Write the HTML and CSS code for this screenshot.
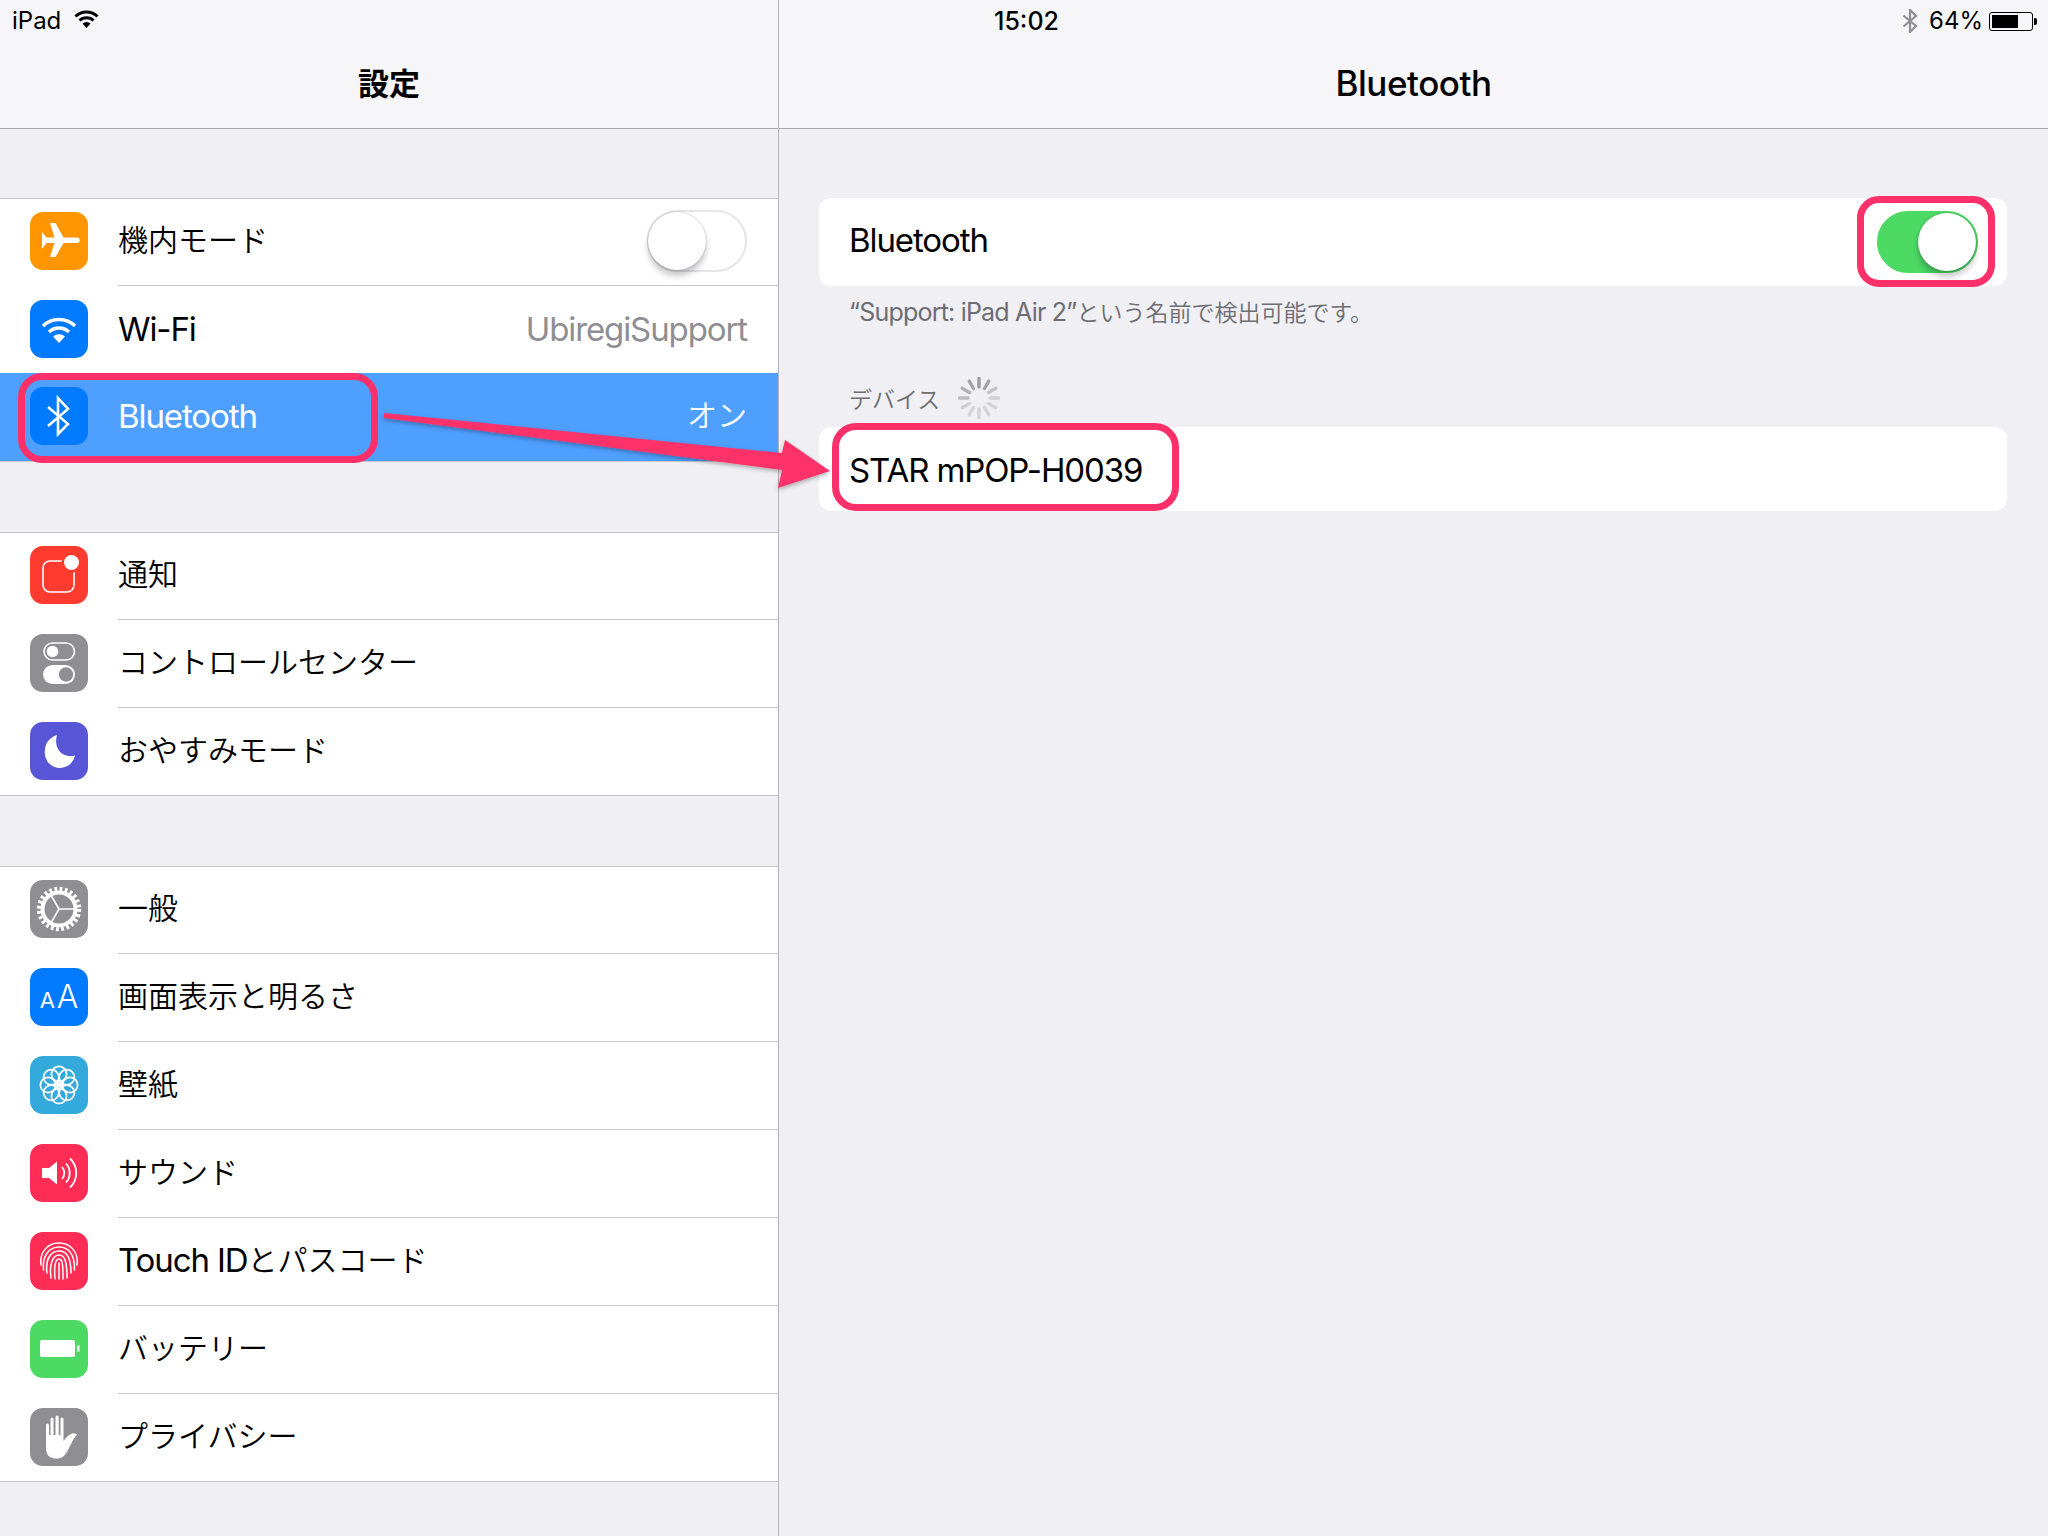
FILE: index.html
```html
<!DOCTYPE html>
<html lang="ja">
<head>
<meta charset="utf-8">
<title>設定 Bluetooth</title>
<link rel="stylesheet" href="styles.css">
</head>
<body>
<div class="screen">
  <aside class="master">
    <header class="bar">
      <div class="status status-left">
        <span>iPad</span>
        <svg class="status-wifi" viewBox="0 0 25 18"><path d="M1.500 6.500A15.500 15.500 0 0 1 23.500 6.500M5.500 10.500A10 10 0 0 1 19.500 10.500" fill="none" stroke="#000" stroke-width="3"/><path d="M12.500 18L8.500 13.500A6 6 0 0 1 16.500 13.500Z"/></svg>
      </div>
      <h1 class="title ja-bold">設定</h1>
    </header>
    <section class="group">
      <div class="row">
        <svg class="icon" viewBox="0 0 58 58"><rect width="58" height="58" rx="13" fill="#ff9500"/><path d="M47 25.500H33.500L25.500 11H20L24.500 25.500H16.500L12 20V37L16.500 31H24.500L20 45H25.500L33.500 31H47a2.750 2.750 0 0 0 0-5.500Z" fill="#fff"/></svg>
        <div class="cell"><span class="ja">機内モード</span><span class="toggle"><span class="knob"></span></span></div>
      </div>
      <div class="row">
        <svg class="icon" viewBox="0 0 58 58"><rect width="58" height="58" rx="13" fill="#007aff"/><path d="M13 26A23 23 0 0 1 45 26M19 32A14.500 14.500 0 0 1 39 32" fill="none" stroke="#fff" stroke-width="3.600"/><path d="M29 43L23 36.500A9 9 0 0 1 35 36.500Z" fill="#fff"/></svg>
        <div class="cell"><span>Wi-Fi</span><span class="detail">UbiregiSupport</span></div>
      </div>
      <div class="row row-selected">
        <svg class="icon" viewBox="0 0 58 58"><rect width="58" height="58" rx="13" fill="#007aff"/><path d="M18 20L38 37L28 47V11L38 22L18 39" fill="none" stroke="#fff" stroke-width="2.600"/></svg>
        <div class="cell"><span>Bluetooth</span><span class="detail ja">オン</span></div>
      </div>
    </section>
    <section class="group">
      <div class="row">
        <svg class="icon" viewBox="0 0 58 58"><rect width="58" height="58" rx="13" fill="#ff3b30"/><rect x="13" y="15" width="31" height="31" rx="7" fill="none" stroke="#fff" stroke-width="1.600"/><circle cx="41.500" cy="16.500" r="10" fill="#ff3b30"/><circle cx="41.500" cy="16.500" r="7.500" fill="#fff"/></svg>
        <div class="cell"><span class="ja">通知</span></div>
      </div>
      <div class="row">
        <svg class="icon" viewBox="0 0 58 58"><rect width="58" height="58" rx="13" fill="#8e8e93"/><rect x="14" y="9" width="30.500" height="17" rx="8.500" fill="none" stroke="#fff" stroke-width="1.600"/><circle cx="22.500" cy="17.500" r="5.800" fill="#fff"/><rect x="13" y="31" width="32" height="19" rx="9.500" fill="#fff"/><circle cx="36" cy="40.500" r="7.200" fill="#8e8e93"/></svg>
        <div class="cell"><span class="ja">コントロールセンター</span></div>
      </div>
      <div class="row">
        <svg class="icon" viewBox="0 0 58 58"><rect width="58" height="58" rx="13" fill="#5856d6"/><path d="M27 13C18 16 15 23 15 28A15 15 0 0 0 45 33.500C33 37 23 27 27 13Z" fill="#fff"/></svg>
        <div class="cell"><span class="ja">おやすみモード</span></div>
      </div>
    </section>
    <section class="group">
      <div class="row">
        <svg class="icon" viewBox="0 0 58 58"><rect width="58" height="58" rx="13" fill="#8e8e93"/><circle cx="29" cy="29" r="20" fill="none" stroke="#fff" stroke-width="4.500" stroke-dasharray="2.800 2.436"/><circle cx="29" cy="29" r="16.500" fill="none" stroke="#fff" stroke-width="4"/><path d="M29 29H45M29 29L20 13.500M29 29L20 44.500" stroke="#fff" stroke-width="1.600" fill="none"/></svg>
        <div class="cell"><span class="ja">一般</span></div>
      </div>
      <div class="row">
        <div class="icon icon-text"><span class="aa-small">A</span><span class="aa-large">A</span></div>
        <div class="cell"><span class="ja">画面表示と明るさ</span></div>
      </div>
      <div class="row">
        <svg class="icon" viewBox="0 0 58 58"><rect width="58" height="58" rx="13" fill="#34aadc"/><g fill="none" stroke="#fff" stroke-width="1.700"><circle cx="29" cy="18" r="7.600"/><circle cx="29" cy="40" r="7.600"/><circle cx="18" cy="29" r="7.600"/><circle cx="40" cy="29" r="7.600"/><circle cx="21.200" cy="21.200" r="7.600"/><circle cx="36.800" cy="21.200" r="7.600"/><circle cx="21.200" cy="36.800" r="7.600"/><circle cx="36.800" cy="36.800" r="7.600"/></g><circle cx="29" cy="29" r="2.800" fill="#fff"/></svg>
        <div class="cell"><span class="ja">壁紙</span></div>
      </div>
      <div class="row">
        <svg class="icon" viewBox="0 0 58 58"><rect width="58" height="58" rx="13" fill="#ff2d55"/><path d="M12 24H19L27 17.500V40.500L19 34H12Z" fill="#fff"/><path d="M32 23A9 9 0 0 1 32 35M36 19.500A14 14 0 0 1 36 38.500M40 14.500A20 20 0 0 1 40 43.500" fill="none" stroke="#fff" stroke-width="1.800"/></svg>
        <div class="cell"><span class="ja">サウンド</span></div>
      </div>
      <div class="row">
        <svg class="icon" viewBox="0 0 58 58"><rect width="58" height="58" rx="13" fill="#ff2d55"/><g fill="none" stroke="#fff" stroke-width="1.500" stroke-linecap="round"><path d="M11 33C9 20 18 11 29 11S49 20 47 33"/><path d="M13.500 38C12 24 19 15 29 15S45 23 44.500 38"/><path d="M17 41C15 27 21 19 29 19S41 26 41 41"/><path d="M21 46C19 32 23 23 29 23S37 30 37 46"/><path d="M25 47C24 35 25 27 29 27S33 35 33 47"/><path d="M29 31V47"/></g></svg>
        <div class="cell"><span>Touch ID</span><span class="ja">とパスコード</span></div>
      </div>
      <div class="row">
        <svg class="icon" viewBox="0 0 58 58"><rect width="58" height="58" rx="13" fill="#4cd964"/><rect x="10" y="20" width="35" height="17" rx="2" fill="#fff"/><path d="M47 25.500H49.500V31.500H47Z" fill="#fff"/></svg>
        <div class="cell"><span class="ja">バッテリー</span></div>
      </div>
      <div class="row">
        <svg class="icon" viewBox="0 0 58 58"><rect width="58" height="58" rx="13" fill="#8e8e93"/><path d="M16 17a1.500 1.500 0 0 1 3 0V27H20.500V11a1.500 1.500 0 0 1 3 0V27H25.500V9a1.600 1.600 0 0 1 3.200 0V27H30.500V11a1.500 1.500 0 0 1 3 0V33C35 31 38 27 42 25.500C44 25 47 26 47 27C42 31 39 43 34 48C31 51 24 51.500 20 49C16 46.500 16 42 16 37Z" fill="#fff"/></svg>
        <div class="cell"><span class="ja">プライバシー</span></div>
      </div>
    </section>
  </aside>

  <main class="detail-pane">
    <header class="bar">
      <div class="status status-center">15:02</div>
      <div class="status status-right">
        <svg class="status-bt" viewBox="0 0 16 24"><path d="M1.500 6.500L14 17L8 23V1L14 7L1.500 17.500" fill="none" stroke="#8e8e93" stroke-width="2.200"/></svg>
        <span>64%</span>
        <span class="battery"><span class="battery-fill"></span></span>
        <span class="battery-nub"></span>
      </div>
      <h1 class="title">Bluetooth</h1>
    </header>
    <div class="card card-switch">
      <span>Bluetooth</span>
      <span class="toggle toggle-on"><span class="knob"></span></span>
    </div>
    <p class="footnote"><span class="fn-latin">“Support: iPad Air 2”</span>という名前で検出可能です。</p>
    <div class="section-head">
      <span>デバイス</span>
      <svg class="spinner" viewBox="-21 -21 42 42" stroke-width="3.400" stroke-linecap="round">
        <path d="M0-19.500V-11" stroke="#9b9b9f"/>
        <path d="M9.800-16.900L5.500-9.500" stroke="#a3a3a7"/>
        <path d="M16.900-9.800L9.500-5.500" stroke="#c4c4c8"/>
        <path d="M19.500 0H11" stroke="#d0d0d4"/>
        <path d="M16.900 9.800L9.500 5.500" stroke="#d4d4d8"/>
        <path d="M9.800 16.900L5.500 9.500" stroke="#d4d4d8"/>
        <path d="M0 19.500V11" stroke="#d4d4d8"/>
        <path d="M-9.800 16.900L-5.500 9.500" stroke="#d4d4d8"/>
        <path d="M-16.900 9.800L-9.500 5.500" stroke="#d0d0d4"/>
        <path d="M-19.500 0H-11" stroke="#bcbcc0"/>
        <path d="M-16.900-9.800L-9.500-5.500" stroke="#b0b0b4"/>
        <path d="M-9.800-16.900L-5.500-9.500" stroke="#a3a3a7"/>
      </svg>
    </div>
    <div class="card card-device"><span>STAR mPOP-H0039</span></div>
  </main>

  <div class="callout callout-bluetooth"></div>
  <div class="callout callout-switch"></div>
  <div class="callout callout-device"></div>
  <svg class="arrow" viewBox="0 0 2048 1536">
    <defs><filter id="arrow-shadow" x="-5%" y="-20%" width="110%" height="140%"><feDropShadow dx="0" dy="2" stdDeviation="2" flood-color="#000" flood-opacity=".3"/></filter></defs>
    <path d="M384 413L782 453L785 440L830 471L778 488L782 470L384 418Z" fill="#fd3069" filter="url(#arrow-shadow)"/>
  </svg>
</div>
</body>
</html>
```
FILE: styles.css
```css
* { box-sizing: border-box; }
html, body { margin: 0; padding: 0; }
body {
  width: 2048px;
  height: 1536px;
  overflow: hidden;
  background: #efeff4;
  color: #000;
  font-family: Inter, "Noto Sans CJK JP", sans-serif;
  font-size: 33px;
  letter-spacing: -1.1px;
}
.screen { position: relative; display: flex; width: 2048px; height: 1536px; }
.master { width: 779px; flex: none; border-right: 1px solid #b4b4b8; }
.detail-pane { flex: 1; min-width: 0; }

.bar {
  position: relative;
  height: 129px;
  background: #f6f6f8;
  border-bottom: 1px solid #a9a9ad;
  display: flex;
  align-items: flex-end;
  justify-content: center;
  padding-bottom: 23px;
}
.title { margin: 0; font-size: 35px; line-height: 44px; font-weight: 500; letter-spacing: -.45px; }
.ja-bold { font-family: "Noto Sans CJK JP", sans-serif; font-size: 31px; font-weight: 700; letter-spacing: 0; margin-bottom: 1px; }

.status {
  position: absolute;
  top: 6px;
  height: 30px;
  display: flex;
  align-items: center;
  font-size: 24px;
  line-height: 30px;
  letter-spacing: 0;
}
.status-left { left: 12px; gap: 13px; }
.status-wifi { width: 25px; height: 18px; margin-top: -5px; }
.status-center { left: 215px; width: 65px; justify-content: center; font-weight: 500; font-size: 25px; }
.status-right { right: 11px; }
.status-bt { width: 16px; height: 24px; margin-right: 11px; }
.battery {
  width: 44px;
  height: 19px;
  margin-left: 6px;
  padding: 2px;
  border: 1.500px solid #000;
  border-radius: 3px;
  display: block;
}
.battery-fill { display: block; width: 26px; height: 100%; background: #000; }
.battery-nub { width: 3px; height: 7px; background: #000; border-radius: 0 2px 2px 0; margin-left: 1px; }

.group {
  margin-top: 70px;
  background: #fff;
  border-top: 1px solid #c8c7cc;
  border-bottom: 1px solid #c8c7cc;
}
.bar + .group { margin-top: 69px; }
.row {
  height: 88px;
  display: flex;
  align-items: flex-start;
  padding-left: 30px;
  gap: 30px;
}
.row:first-child, .row:last-child { height: 87px; }
.icon { width: 58px; height: 58px; margin-top: 14px; flex: none; display: block; }
.row:first-child .icon { margin-top: 13px; }
.cell {
  flex: 1;
  min-width: 0;
  align-self: stretch;
  display: flex;
  align-items: center;
  padding: 0 31px 3px 0;
  border-bottom: 1px solid #c8c7cc;
}
.row:last-child .cell { border-bottom: 0; }
.ja {
  font-family: "Noto Sans CJK JP", sans-serif;
  font-size: 30px;
  font-weight: 350;
  letter-spacing: 0;
  margin-bottom: 5px;
}
.detail { margin-left: auto; color: #8e8e93; }
.row.row-selected { background: #4f9fff; color: #fff; margin-top: -1px; height: 88px; }
.row-selected .cell { border-bottom: 0; }
.row-selected .detail { color: #fff; }
.row:has(+ .row-selected) .cell { border-bottom: 0; }

.toggle {
  position: relative;
  display: block;
  width: 100px;
  height: 62px;
  margin-left: auto;
  flex: none;
  border-radius: 31px;
  border: 2px solid #e5e5ea;
  background: #fff;
}
.knob {
  position: absolute;
  top: 0;
  left: -1px;
  width: 58px;
  height: 58px;
  border-radius: 50%;
  background: #fff;
  box-shadow: 0 6px 6px rgba(0,0,0,.22), 0 0 2px rgba(0,0,0,.3);
}
.toggle-on { background: #4cd964; border-color: #4cd964; width: 101px; }
.toggle-on .knob { left: auto; right: 0; }

.card {
  margin: 0 41px 0 40px;
  background: #fff;
  border-radius: 12px;
  display: flex;
  align-items: center;
  padding: 0 30px;
}
.card-switch { margin-top: 69px; height: 88px; padding: 0 29px 0 30px; }
.card-switch > span:first-child { margin-bottom: 4px; }
.card-device { height: 84px; padding-top: 2px; }
.footnote {
  margin: 9px 41px 0 40px;
  padding-left: 30px;
  color: #6d6d72;
  font-family: "Noto Sans CJK JP", sans-serif;
  font-size: 23px;
  font-weight: 350;
  line-height: 32px;
  letter-spacing: 0;
}
.fn-latin { font-family: Inter, sans-serif; font-size: 25px; font-weight: 400; letter-spacing: -.8px; }
.section-head {
  margin: 0 41px 0 40px;
  padding: 47px 30px 7px;
  height: 99px;
  display: flex;
  align-items: center;
  gap: 18px;
  color: #6d6d72;
  font-family: "Noto Sans CJK JP", sans-serif;
  font-size: 23px;
  font-weight: 350;
  letter-spacing: 0;
}
.spinner { width: 42px; height: 42px; }

.icon-text {
  background: #007aff;
  border-radius: 13px;
  color: #fff;
  display: flex;
  align-items: baseline;
  justify-content: center;
  gap: 2px;
  line-height: 58px;
  letter-spacing: 0;
}
.aa-small { font-size: 22px; }
.aa-large { font-size: 32px; font-weight: 300; }

.callout {
  position: absolute;
  border: 7px solid #fd3069;
  border-radius: 24px;
}
.callout-bluetooth { left: 18px; top: 373px; width: 360px; height: 90px; }
.callout-switch { left: 1857px; top: 196px; width: 138px; height: 91px; border-radius: 22px; }
.callout-device { left: 832px; top: 423px; width: 347px; height: 88px; }
.arrow { position: absolute; left: 0; top: 0; width: 2048px; height: 1536px; pointer-events: none; }
```
